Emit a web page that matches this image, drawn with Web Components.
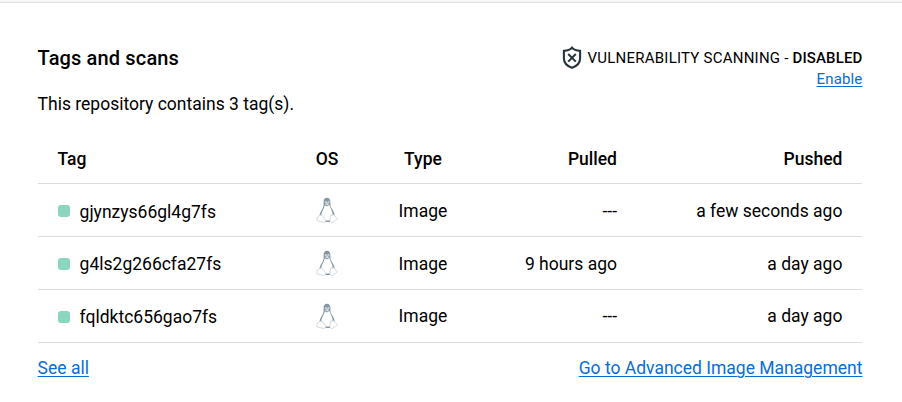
<!DOCTYPE html>
<html lang="en">
<head>
<meta charset="utf-8">
<title>Tags and scans</title>
<style>
body{margin:0;background:#fff;color:#000;font-family:Roboto,"Liberation Sans",sans-serif;font-size:17.5px;line-height:24px}
</style>
</head>
<body>
<tags-card></tags-card>
<script>
const define = (name, html) => customElements.define(name, class extends HTMLElement {
  constructor() {
    super();
    const t = document.createElement('template');
    t.innerHTML = html;
    this.attachShadow({mode: 'open'}).append(t.content.cloneNode(true));
  }
});

define('text-link', `<style>
:host{display:inline-block}
a{color:#086dd7;text-decoration:underline;text-decoration-thickness:1px;text-underline-offset:2px;cursor:pointer;white-space:nowrap}
</style><a><slot></slot></a>`);

define('shield-icon', `<style>:host{display:block;width:20px;height:24px}svg{display:block}</style>
<svg width="20" height="24" viewBox="0 0 20 24" fill="none" stroke="#27343b">
<path d="M10 1.700C8.300 3.800 5 4.800 1.900 4.900v7.300c0 4.900 3.500 8 8.100 9.600 4.600-1.600 8.100-4.700 8.100-9.600V4.900C15 4.800 11.700 3.800 10 1.700z" stroke-width="2.1"/>
<path d="M6.200 8l7.600 7.600M13.800 8l-7.600 7.600" stroke-width="2"/></svg>`);

define('linux-icon', `<style>:host{display:block;width:22px;height:27px}svg{display:block}</style>
<svg width="22" height="27" viewBox="0 0 22 27">
<path d="M11 .8C8.700.8 7.500 2.600 7.600 5.100c.1 2.600.2 4.300-1 6.300C5 14.100 3.300 16.600 3.500 19.500L8 25h6.500l4-5.500c.5-3.500-1.700-6.200-3.200-8.800-1.200-2-.8-3.500-.9-5.600C14.300 2.600 13.300.8 11 .8z" fill="#8496a1"/>
<path d="M8.800 8.200C8.500 11 6 13.700 5.400 17.100l.2 2.400 3.700 4h4.500l1.500-4.500 1.300-1.200c.3-3-2-6-3.200-9.800L11 9.400z" fill="#fff"/>
<path d="M8.900 5.500c.6-.9 1.300-.8 1.800 0M11.600 5.500c.6-1 1.400-.9 1.800 0" stroke="#e8edef" stroke-width="1.1" fill="none"/>
<path d="M8.900 7l2.100-1 2.500 1-2.300 1.600z" fill="#dce2e5"/>
<path d="M3.700 18.300l2-.3 4 4.700c.6 1.800-.8 2.900-2.600 2.600L1.200 23.900c-.8-.5 0-1.900-.2-3.300.4-1 2-.6 2.700-2.300zM14.600 18.200l3.800-.4c.1 1.900 1.800 2.300 2.800 3.600.2 1-2.900 2.400-4.500 3.900-1.300.6-2.900-.1-2.800-1.900.3-1.600.1-3.600.7-5.200z" fill="#fff" stroke="#c5ced3" stroke-width=".8"/>
</svg>`);

define('scan-status', `<style>
:host{display:flex;flex-direction:column;align-items:flex-end;font-size:15px;line-height:21px}
div{display:flex;align-items:center;gap:6px;height:24px;white-space:nowrap;letter-spacing:.23px}
b{font-weight:500;letter-spacing:.12px}
text-link{margin-top:-1px;letter-spacing:.14px}
</style><div><shield-icon></shield-icon><span>VULNERABILITY SCANNING - <b><slot></slot></b></span></div><text-link>Enable</text-link>`);

define('tag-row', `<style>
:host{display:grid;grid-template-columns:228.400px 82px 110px 139px 1fr;align-items:center;height:52px;padding:0 20px;border-bottom:1px solid #dcdcdc;white-space:nowrap}
:host([header]){font-weight:500;height:48px}
.c{justify-self:center}.r{justify-self:end}
.t{padding-top:var(--text-top,0)}
</style><slot name="tag"></slot><span class="c"><slot name="os"></slot></span><span class="c t"><slot name="type"></slot></span><span class="r t"><slot name="pulled"></slot></span><span class="r t"><slot name="pushed"></slot></span>`);

define('tag-name', `<style>
:host{display:flex;align-items:center;gap:10px;padding-top:2px}
i{width:12px;height:12px;border-radius:3px;background:#8ad6bf}
span{padding-top:var(--name-top,0);line-height:22px}
</style><i></i><span><slot></slot></span>`);

const row = (cls, tag, pulled, pushed) => `<tag-row class="${cls}"><tag-name slot="tag">${tag}</tag-name><linux-icon slot="os"></linux-icon><span slot="type">Image</span><span slot="pulled">${pulled}</span><span slot="pushed">${pushed}</span></tag-row>`;

define('tags-card', `<style>
:host{display:block}
.strip{height:2px;background:#f5f7f9;border-bottom:1px solid #dddfe1}
main{padding:43px 39.600px 0 37.600px}
header{display:flex;justify-content:space-between;height:46px}
h2{margin:-1px 0 0;font-size:20px;line-height:26px;font-weight:500;letter-spacing:.15px}
p{margin:0;height:43px}
.first{--text-top:2px;--name-top:2px}
.middle{--text-top:2px}
footer{display:flex;justify-content:space-between;padding-top:13px}
</style>
<div class="strip"></div>
<main>
<header><h2>Tags and scans</h2><scan-status>DISABLED</scan-status></header>
<p>This repository contains 3 tag(s).</p>
<section>
<tag-row header><span slot="tag">Tag</span><span slot="os">OS</span><span slot="type">Type</span><span slot="pulled">Pulled</span><span slot="pushed">Pushed</span></tag-row>
${row('first', 'gjynzys66gl4g7fs', '---', 'a few seconds ago')}
${row('middle', 'g4ls2g266cfa27fs', '9 hours ago', 'a day ago')}
${row('last', 'fqldktc656gao7fs', '---', 'a day ago')}
</section>
<footer><text-link>See all</text-link><text-link>Go to Advanced Image Management</text-link></footer>
</main>`);
</script>
</body>
</html>
